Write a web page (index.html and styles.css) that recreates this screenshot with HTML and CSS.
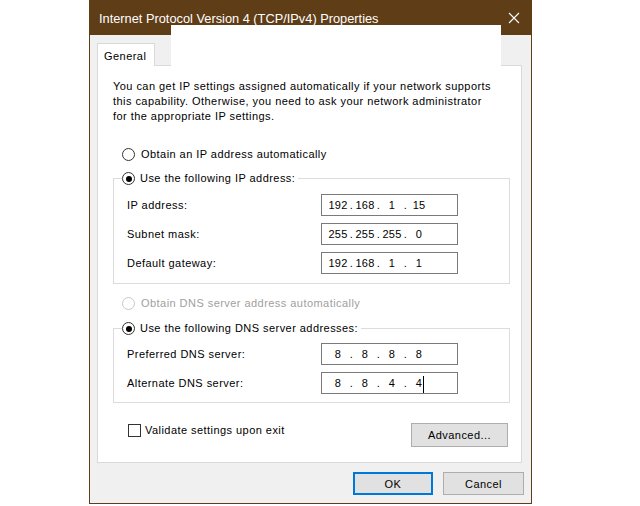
FILE: index.html
```html
<!DOCTYPE html>
<html>
<head>
<meta charset="utf-8">
<link rel="stylesheet" href="styles.css">
</head>
<body>
<div class="window">
  <div class="titlebar">
    <span class="title">Internet Protocol Version 4 (TCP/IPv4) Properties</span>
    <svg class="close" width="12" height="12" viewBox="0 0 12 12"><path d="M1 1L11 11M11 1L1 11" stroke="#fff" stroke-width="1.1" fill="none"/></svg>
  </div>
  <div class="client">
    <div class="tabs"><div class="tab">General</div></div>
    <div class="panel">
      <p class="intro">You can get IP settings assigned automatically if your network supports this capability. Otherwise, you need to ask your network administrator for the appropriate IP settings.</p>
      <div class="radio-row first"><span class="radio"></span><span>Obtain an IP address automatically</span></div>
      <fieldset class="group g1">
        <legend><span class="radio on"></span><span>Use the following IP address:</span></legend>
        <div class="field-row"><span>IP address:</span><div class="ip"><span>192</span><i>.</i><span>168</span><i>.</i><span>1</span><i>.</i><span>15</span></div></div>
        <div class="field-row"><span>Subnet mask:</span><div class="ip"><span>255</span><i>.</i><span>255</span><i>.</i><span>255</span><i>.</i><span>0</span></div></div>
        <div class="field-row"><span>Default gateway:</span><div class="ip"><span>192</span><i>.</i><span>168</span><i>.</i><span>1</span><i>.</i><span>1</span></div></div>
      </fieldset>
      <div class="radio-row disabled"><span class="radio"></span><span>Obtain DNS server address automatically</span></div>
      <fieldset class="group g2">
        <legend><span class="radio on"></span><span>Use the following DNS server addresses:</span></legend>
        <div class="field-row"><span>Preferred DNS server:</span><div class="ip"><span>8</span><i>.</i><span>8</span><i>.</i><span>8</span><i>.</i><span>8</span></div></div>
        <div class="field-row"><span>Alternate DNS server:</span><div class="ip"><span>8</span><i>.</i><span>8</span><i>.</i><span>4</span><i>.</i><span class="caret">4</span></div></div>
      </fieldset>
      <div class="bottom-row">
        <div class="check-row"><span class="checkbox"></span><span>Validate settings upon exit</span></div>
        <div class="btn advanced">Advanced...</div>
      </div>
    </div>
    <div class="buttons">
      <div class="btn ok">OK</div>
      <div class="btn cancel">Cancel</div>
    </div>
  </div>
  <div class="overlay"></div>
</div>
</body>
</html>
```
FILE: styles.css
```css
html, body {
  margin: 0;
  padding: 0;
  background: #ffffff;
}
body {
  font-family: "Liberation Sans", Arial, sans-serif;
  font-size: 11px;
  letter-spacing: 0.45px;
  color: #000;
}
.window {
  position: relative;
  margin-left: 89px;
  width: 441px;
  height: 503px;
  border: 1px solid #5f3d17;
  border-top: none;
  background: #f0f0f0;
}
.titlebar {
  height: 35px;
  margin: 0 -1px;
  background: #5f3d17;
  display: flex;
  align-items: center;
  justify-content: space-between;
  padding: 0 12px 0 10px;
}
.title {
  color: #fff;
  font-size: 12.8px;
  letter-spacing: 0;
  padding-top: 1px;
}
.close {
  display: block;
}
.client {
  padding: 8px 0 0 7px;
}
.tabs {
  display: flex;
  height: 22px;
  position: relative;
  z-index: 1;
}
.tab {
  width: 58px;
  height: 23px;
  box-sizing: border-box;
  border: 1px solid #d9d9d9;
  border-bottom: none;
  background: #fff;
  padding: 6px 0 0 6px;
}
.panel {
  width: 423px;
  border: 1px solid #d9d9d9;
  background: #fff;
  padding: 13px 0 0 0;
  box-sizing: content-box;
  height: 383px;
}
.intro {
  margin: 0 26px 0 15px;
  line-height: 15px;
}
.radio-row, legend, .check-row {
  display: flex;
  align-items: center;
  height: 15px;
  line-height: 15px;
}
.radio-row {
  padding-left: 24px;
}
.radio-row.first {
  margin-top: 23px;
}
.radio {
  width: 11px;
  height: 11px;
  border: 1px solid #333;
  border-radius: 50%;
  box-sizing: content-box;
  margin-right: 6px;
  position: relative;
  flex: none;
}
.radio.on::after {
  content: "";
  position: absolute;
  left: 2.5px;
  top: 2.5px;
  width: 6px;
  height: 6px;
  border-radius: 50%;
  background: #000;
}
.disabled {
  color: #a0a0a0;
}
.disabled .radio {
  border-color: #c8c8c8;
}
.group {
  margin: 9px 0 0 15px;
  width: 395px;
  border: 1px solid #dcdcdc;
  padding: 8px 0 9px 0;
  min-inline-size: 0;
  box-sizing: content-box;
}
.g2 {
  margin-top: 10px;
  padding-top: 7px;
  padding-bottom: 8px;
}
legend {
  padding: 0 3px 0 0;
  margin-left: 8px;
}
legend .radio {
  margin-right: 5px;
}
.field-row {
  display: grid;
  grid-template-columns: 194px 137px;
  align-items: center;
  height: 22px;
  padding-left: 13px;
}
.field-row + .field-row {
  margin-top: 7px;
}
.ip {
  height: 22px;
  box-sizing: border-box;
  border: 1px solid #7a7a7a;
  display: flex;
  align-items: center;
  padding-left: 6px;
  letter-spacing: 0.2px;
}
.ip span {
  width: 20px;
  text-align: center;
}
.ip i {
  font-style: normal;
  width: 7px;
  text-align: center;
}
.ip .caret {
  position: relative;
}
.ip .caret::after {
  content: "";
  position: absolute;
  left: 14px;
  top: -1px;
  width: 1px;
  height: 17px;
  background: #000;
}
.radio-row.disabled {
  margin-top: 12px;
}
.bottom-row {
  display: flex;
  justify-content: space-between;
  align-items: flex-start;
  margin-top: 20px;
  padding: 0 13px 0 30px;
}
.checkbox {
  width: 11px;
  height: 11px;
  border: 1px solid #333;
  margin-right: 4px;
  box-sizing: content-box;
}
.btn {
  height: 23px;
  box-sizing: border-box;
  background: #e1e1e1;
  border: 1px solid #adadad;
  display: flex;
  align-items: center;
  justify-content: center;
}
.advanced {
  width: 97px;
  height: 24px;
}
.buttons {
  display: flex;
  justify-content: flex-end;
  gap: 10px;
  margin-top: 9px;
  padding-right: 7px;
}
.ok {
  width: 80px;
  border: 2px solid #0078d7;
}
.cancel {
  width: 81px;
}
.overlay {
  position: absolute;
  left: 81px;
  top: 25px;
  width: 330px;
  height: 41px;
  background: #fff;
}
```
